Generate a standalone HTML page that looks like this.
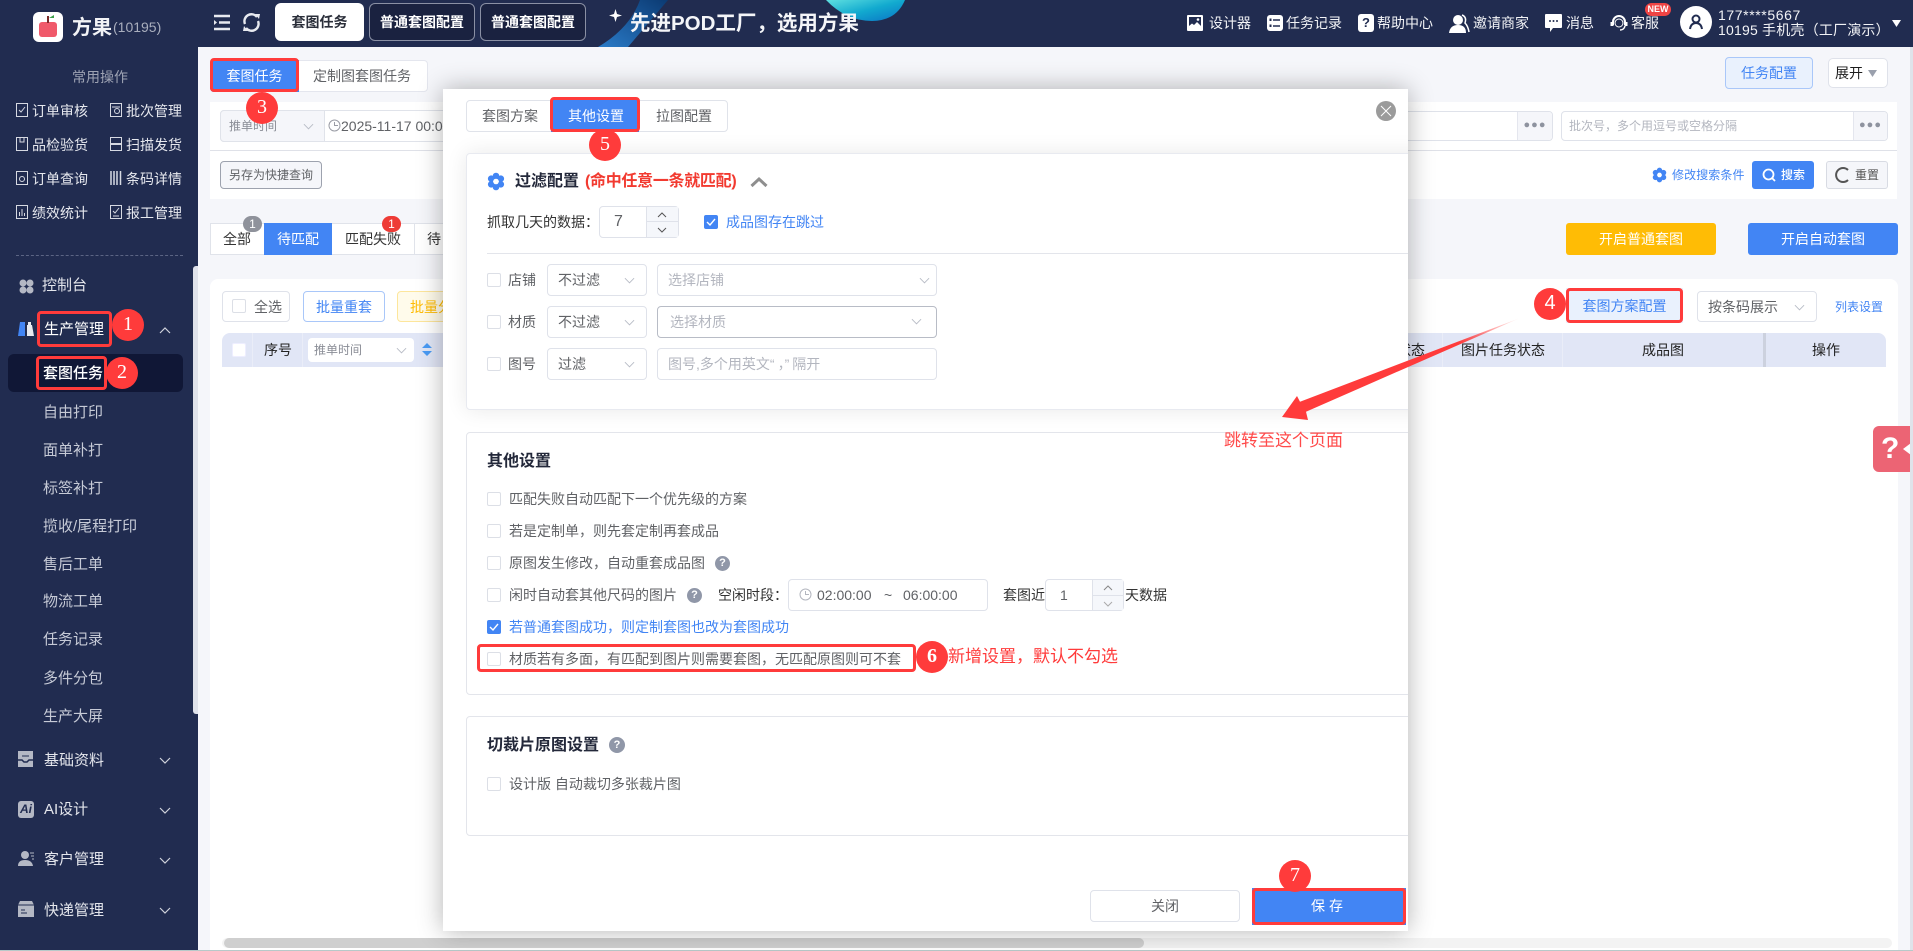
<!DOCTYPE html>
<html lang="zh"><head><meta charset="utf-8"><title>方果</title>
<style>
html,body{margin:0;padding:0;width:1913px;height:951px;overflow:hidden;background:#f5f6fa}
body{font-family:"Liberation Sans","Noto Sans CJK SC",sans-serif;font-size:14px;color:#333;position:relative}
.a{position:absolute;box-sizing:border-box}
.t{position:absolute;white-space:nowrap;line-height:20px}
.b{font-weight:700}
.nav{color:#c6cad6;font-size:15px}
.q{color:#e6e8ee;font-size:14px}
.m{color:#e4e6ec;font-size:15px}
.g{color:#606266}
.ph{color:#b3b6bf}
.bl{color:#4285f4}
.cb{position:absolute;box-sizing:border-box;width:14px;height:14px;border:1px solid #dcdfe6;border-radius:2px;background:#fff}
.ck{position:absolute;width:14px;height:14px;border-radius:2px;background:#4285f4}
.bx{position:absolute;box-sizing:border-box;background:#fff;border:1px solid #dfe2ea;border-radius:4px}
.rd{position:absolute;box-sizing:border-box;border:3px solid #ff3b3b;border-radius:4px}
.c{position:absolute;box-sizing:border-box;width:32px;height:32px;border-radius:50%;background:#ff3b3b;color:#fff;text-align:center;line-height:31px;font-size:20px;font-family:"Liberation Serif",serif}
.ce{text-align:center}
svg{position:absolute;overflow:visible}
.qi{position:absolute;width:15px;height:15px;border-radius:50%;background:#9097a8;color:#fff;font-size:11px;font-weight:700;line-height:15px;text-align:center}
</style></head><body>
<svg width="0" height="0" style="position:absolute"><defs>
<symbol id="d" viewBox="0 0 12 7"><polyline points="1,1 6,6 11,1" fill="none" stroke="#b8bcc6" stroke-width="1"/></symbol>
<symbol id="dw" viewBox="0 0 12 7"><polyline points="1,1 6,6 11,1" fill="none" stroke="#d0d3dc" stroke-width="1.2"/></symbol>
<symbol id="v" viewBox="0 0 14 14"><polyline points="3,7 6,10 11,4" fill="none" stroke="#fff" stroke-width="1.4"/></symbol>
<symbol id="gear" viewBox="0 0 18 18"><g fill="#4285f4"><circle cx="9" cy="3.500" r="3.300"/><circle cx="9" cy="14.500" r="3.300"/><circle cx="4.200" cy="6.200" r="3.300"/><circle cx="13.800" cy="6.200" r="3.300"/><circle cx="4.200" cy="11.800" r="3.300"/><circle cx="13.800" cy="11.800" r="3.300"/></g><circle cx="9" cy="9" r="2.800" fill="#fff"/></symbol>
<linearGradient id="g1" x1="0" y1="0" x2="1" y2="1"><stop offset="0" stop-color="#5fe0e0"/><stop offset=".5" stop-color="#12aacf"/><stop offset="1" stop-color="#0a72c4"/></linearGradient>
<linearGradient id="g2" x1="0" y1="1" x2="1" y2="0"><stop offset="0" stop-color="#2a7bc8"/><stop offset="1" stop-color="#0b3a72"/></linearGradient>
<linearGradient id="g3" x1="1" y1="0" x2="0" y2="1"><stop offset="0" stop-color="#ff3b3b" stop-opacity="0"/><stop offset=".25" stop-color="#ff3b3b"/><stop offset="1" stop-color="#ff3b3b"/></linearGradient>
</defs></svg>

<!-- header -->
<div class="a" style="left:0;top:0;width:1913px;height:47px;background:#212c50"></div>
<svg style="left:0;top:0" width="1913" height="47">
<path d="M598 47L628 47L668 0L640 0Q630 28 598 47Z" fill="url(#g2)"/>
<path d="M826 0Q846 21 872 21Q896 21 905 0Z" fill="url(#g1)"/>
<path d="M615.500 9L617 14L622 15.500L617 17L615.500 22L614 17L609 15.500L614 14Z" fill="#fff"/>
</svg>
<!-- logo -->
<div class="a" style="left:33px;top:12px;width:30px;height:30px;background:#fff;border-radius:6px"></div>
<div class="a" style="left:39px;top:22px;width:18px;height:15px;background:#f0596a;border-radius:3px"></div>
<svg style="left:39px;top:15px" width="18" height="9"><path d="M9 1V8" stroke="#7a2a2a" stroke-width="2"/><path d="M10 3L15 0V3Z" fill="#3ca04a"/></svg>
<div class="t b" style="left:72px;top:18px;font-size:20px;color:#f2f3f6">方果</div>
<div class="t" style="left:113px;top:17px;font-size:14px;color:#a9aebd">(10195)</div>
<svg style="left:213px;top:14px" width="18" height="17"><path d="M1 2H17M6 8.500H17M1 15H17" stroke="#e8eaf0" stroke-width="2.500" fill="none"/><path d="M1 6V11L4 8.500Z" fill="#e8eaf0"/></svg>
<svg style="left:242px;top:13px" width="19" height="19" viewBox="0 0 19 19"><path d="M3 11A7 7 0 0 1 15 4" fill="none" stroke="#e8eaf0" stroke-width="2.400"/><path d="M16 8A7 7 0 0 1 4 15" fill="none" stroke="#e8eaf0" stroke-width="2.400"/><path d="M13 1L18 1L17 6Z" fill="#e8eaf0"/><path d="M6 18L1 18L2 13Z" fill="#e8eaf0"/></svg>
<div class="a" style="left:275px;top:3px;width:89px;height:38px;background:#fff;border-radius:6px"></div>
<div class="t b ce" style="left:275px;top:12px;width:89px;color:#2b2f3a">套图任务</div>
<div class="a" style="left:369px;top:3px;width:106px;height:38px;border:1px solid #8a90a4;border-radius:6px;background:#1a2240"></div>
<div class="t b ce" style="left:369px;top:12px;width:106px;color:#fff">普通套图配置</div>
<div class="a" style="left:480px;top:3px;width:106px;height:38px;border:1px solid #8a90a4;border-radius:6px;background:#1a2240"></div>
<div class="t b ce" style="left:480px;top:12px;width:106px;color:#fff">普通套图配置</div>
<div class="t b" style="left:630px;top:13px;font-size:20.500px;color:#f4f5f8;line-height:22px">先进POD工厂，选用方果</div>

<svg style="left:1187px;top:15px" width="16" height="16"><rect width="16" height="16" rx="1" fill="#fff"/><path d="M2 2H14V11L10 7L7 10L5 8.500L2 11Z" fill="#212c50"/><circle cx="11" cy="4.500" r="1.300" fill="#fff"/></svg>
<div class="t" style="left:1209px;top:13px;color:#f2f3f6">设计器</div>
<svg style="left:1267px;top:15px" width="16" height="16"><rect width="16" height="16" rx="3" fill="#fff"/><path d="M6 5H13M6 11H13" stroke="#212c50" stroke-width="1.500"/><rect x="2.500" y="3.500" width="2" height="2.500" fill="#212c50"/><rect x="2.500" y="9.500" width="2" height="2.500" fill="#212c50"/></svg>
<div class="t" style="left:1286px;top:13px;color:#f2f3f6">任务记录</div>
<div class="a" style="left:1358px;top:14px;width:16px;height:18px;background:#fff;border-radius:3px;color:#212c50;font-size:13px;font-weight:700;text-align:center;line-height:18px">?</div>
<div class="t" style="left:1377px;top:13px;color:#f2f3f6">帮助中心</div>
<svg style="left:1449px;top:14px" width="20" height="19"><circle cx="9" cy="6" r="5" fill="#fff"/><path d="M0 19Q1 11 9 11Q17 11 17 19Z" fill="#fff"/><path d="M13 1Q18 3 16 9Q19 12 20 18" fill="none" stroke="#fff" stroke-width="1.500"/></svg>
<div class="t" style="left:1473px;top:13px;color:#f2f3f6">邀请商家</div>
<svg style="left:1545px;top:14px" width="17" height="19"><path d="M1 0H16Q17 0 17 1V13Q17 14 16 14H8L5 18V14H1Q0 14 0 13V1Q0 0 1 0Z" fill="#fff"/><circle cx="5" cy="7" r="1" fill="#212c50"/><circle cx="8.500" cy="7" r="1" fill="#212c50"/><circle cx="12" cy="7" r="1" fill="#212c50"/></svg>
<div class="t" style="left:1566px;top:13px;color:#f2f3f6">消息</div>
<svg style="left:1610px;top:14px" width="18" height="18"><path d="M3 11V8A6 6 0 0 1 15 8V11" fill="none" stroke="#fff" stroke-width="2"/><circle cx="9" cy="9" r="4" fill="none" stroke="#fff" stroke-width="1"/><path d="M0.500 8V12H3.500V8ZM14.500 8V12H17.500V8Z" fill="#fff"/><path d="M15 12Q14 16 10 16" fill="none" stroke="#fff" stroke-width="1.500"/></svg>
<div class="t" style="left:1631px;top:13px;color:#f2f3f6">客服</div>
<div class="a" style="left:1645px;top:3px;width:26px;height:13px;border-radius:7px;background:#ef4444;color:#fff;font-size:9px;font-weight:700;text-align:center;line-height:13px">NEW</div>
<div class="a" style="left:1680px;top:6px;width:32px;height:32px;border-radius:50%;background:#fff"></div>
<svg style="left:1689px;top:14px" width="14" height="16"><circle cx="7" cy="5" r="3.500" fill="none" stroke="#212c50" stroke-width="2"/><path d="M1 15Q2 9 7 9Q12 9 13 15" fill="none" stroke="#212c50" stroke-width="2"/></svg>
<div class="t" style="left:1718px;top:5px;color:#f2f3f6;letter-spacing:.6px">177****5667</div>
<div class="t" style="left:1718px;top:20px;color:#f2f3f6;letter-spacing:.2px">10195 手机壳（工厂演示）</div>
<svg style="left:1892px;top:20px" width="9" height="7"><path d="M0 0H9L4.500 7Z" fill="#fff"/></svg>

<!-- sidebar -->
<div class="a" style="left:0;top:47px;width:198px;height:904px;background:#212c50"></div>
<div class="a" style="left:193px;top:266px;width:5px;height:448px;background:#dfe2ea;border-radius:3px 0 0 3px"></div>
<div class="t" style="left:72px;top:67px;color:#9ea3b3">常用操作</div>

<svg style="left:16px;top:103px" width="12" height="14"><rect x=".5" y=".5" width="11" height="13" fill="none" stroke="#d6d9e2"/><path d="M3 7L5 9L9 4" fill="none" stroke="#d6d9e2"/></svg>
<div class="t q" style="left:32px;top:101px">订单审核</div>
<svg style="left:110px;top:103px" width="12" height="14"><rect x=".5" y=".5" width="11" height="13" fill="none" stroke="#d6d9e2"/><circle cx="7" cy="8" r="2.500" fill="none" stroke="#d6d9e2"/><path d="M2 4H10" stroke="#d6d9e2"/></svg>
<div class="t q" style="left:126px;top:101px">批次管理</div>
<svg style="left:16px;top:137px" width="12" height="14"><rect x=".5" y=".5" width="11" height="13" fill="none" stroke="#d6d9e2"/><path d="M4 1V5H8V1" fill="none" stroke="#d6d9e2"/></svg>
<div class="t q" style="left:32px;top:135px">品检验货</div>
<svg style="left:110px;top:137px" width="12" height="14"><rect x=".5" y=".5" width="11" height="13" fill="none" stroke="#d6d9e2"/><path d="M0 7H12" stroke="#d6d9e2" stroke-width="2"/></svg>
<div class="t q" style="left:126px;top:135px">扫描发货</div>
<svg style="left:16px;top:171px" width="12" height="14"><rect x=".5" y=".5" width="11" height="13" fill="none" stroke="#d6d9e2"/><circle cx="6" cy="8" r="2.500" fill="none" stroke="#d6d9e2"/></svg>
<div class="t q" style="left:32px;top:169px">订单查询</div>
<svg style="left:110px;top:171px" width="12" height="14"><path d="M1 0V14M4 0V14M7 0V14M10.500 0V14" stroke="#d6d9e2" stroke-width="1.500"/></svg>
<div class="t q" style="left:126px;top:169px">条码详情</div>
<svg style="left:16px;top:205px" width="12" height="14"><rect x=".5" y=".5" width="11" height="13" fill="none" stroke="#d6d9e2"/><path d="M3.500 11V7M6 11V4M8.500 11V8" stroke="#d6d9e2"/></svg>
<div class="t q" style="left:32px;top:203px">绩效统计</div>
<svg style="left:110px;top:205px" width="12" height="14"><rect x=".5" y=".5" width="11" height="13" fill="none" stroke="#d6d9e2"/><path d="M3 6L5 8L9 3M3 11H9" fill="none" stroke="#d6d9e2"/></svg>
<div class="t q" style="left:126px;top:203px">报工管理</div>
<div class="a" style="left:16px;top:255px;width:167px;border-top:1px dashed #5c6584"></div>

<svg style="left:19px;top:279px" width="15" height="15"><circle cx="4" cy="4" r="3.500" fill="#b4b8c4"/><circle cx="11" cy="4" r="3.500" fill="#b4b8c4"/><circle cx="4" cy="11" r="3.500" fill="#b4b8c4"/><circle cx="11" cy="11" r="3.500" fill="#b4b8c4"/></svg>
<div class="t m" style="left:42px;top:276px">控制台</div>
<svg style="left:18px;top:322px" width="16" height="14"><path d="M0 14L2 0H7V14Z" fill="#4285f4"/><path d="M9 14V3H14L16 14Z" fill="#e8eaf0"/><path d="M10 0H13V3H10Z" fill="#e8eaf0"/></svg>
<div class="t m" style="left:44px;top:320px;color:#fff">生产管理</div>
<svg style="left:159px;top:327px" width="12" height="7"><polyline points="1,6 6,1 11,6" fill="none" stroke="#d0d3dc" stroke-width="1.200"/></svg>
<div class="a" style="left:8px;top:354px;width:175px;height:38px;background:#101736;border-radius:6px"></div>
<div class="t nav" style="left:43px;top:364px;color:#fff;font-weight:500">套图任务</div>
<div class="t nav" style="left:43px;top:403px">自由打印</div>
<div class="t nav" style="left:43px;top:441px">面单补打</div>
<div class="t nav" style="left:43px;top:479px">标签补打</div>
<div class="t nav" style="left:43px;top:517px">揽收/尾程打印</div>
<div class="t nav" style="left:43px;top:555px">售后工单</div>
<div class="t nav" style="left:43px;top:592px">物流工单</div>
<div class="t nav" style="left:43px;top:630px">任务记录</div>
<div class="t nav" style="left:43px;top:669px">多件分包</div>
<div class="t nav" style="left:43px;top:707px">生产大屏</div>

<svg style="left:18px;top:751px" width="15" height="16"><path d="M0 0H15V16H0Z" fill="#b4b8c4"/><path d="M0 9H4L6 11H9L11 9H15" fill="none" stroke="#212c50" stroke-width="1.500"/><path d="M4 5H11" stroke="#212c50"/></svg>
<div class="t m" style="left:44px;top:751px">基础资料</div>
<svg style="left:159px;top:757px" width="12" height="7"><use href="#dw"/></svg>
<div class="a" style="left:18px;top:801px;width:16px;height:17px;background:#b4b8c4;border-radius:3px;color:#212c50;font-size:12px;font-weight:700;font-style:italic;line-height:17px;text-align:center">Ai</div>
<div class="t m" style="left:44px;top:800px">AI设计</div>
<svg style="left:159px;top:807px" width="12" height="7"><use href="#dw"/></svg>
<svg style="left:18px;top:851px" width="16" height="15"><circle cx="7" cy="4" r="4" fill="#b4b8c4"/><path d="M0 15Q0 9 7 9Q14 9 15 15Z" fill="#b4b8c4"/><path d="M12 2H16M13 5H16M14 8H16" stroke="#b4b8c4"/></svg>
<div class="t m" style="left:44px;top:850px">客户管理</div>
<svg style="left:159px;top:857px" width="12" height="7"><use href="#dw"/></svg>
<svg style="left:18px;top:901px" width="16" height="16"><path d="M2 0H14L16 4V16H0V4Z" fill="#b4b8c4"/><path d="M0 4H16" stroke="#212c50"/><path d="M3 9H7M3 12H9" stroke="#212c50"/></svg>
<div class="t m" style="left:44px;top:901px">快递管理</div>
<svg style="left:159px;top:907px" width="12" height="7"><use href="#dw"/></svg>

<!-- main -->
<div class="a" style="left:210px;top:60px;width:218px;height:32px;background:#fff;border:1px solid #e4e6ee;border-radius:4px"></div>
<div class="a" style="left:210px;top:60px;width:89px;height:32px;background:#4285f4;border-radius:4px 0 0 4px"></div>
<div class="t ce" style="left:210px;top:66px;width:89px;color:#fff">套图任务</div>
<div class="t g" style="left:313px;top:66px">定制图套图任务</div>
<div class="a" style="left:1725px;top:57px;width:88px;height:32px;background:#e9f1fd;border:1px solid #a9c7f9;border-radius:4px"></div>
<div class="t ce bl" style="left:1725px;top:63px;width:88px">任务配置</div>
<div class="bx" style="left:1828px;top:58px;width:60px;height:30px;border-radius:5px"></div>
<div class="t" style="left:1835px;top:63px;color:#1c1c1c">展开</div>
<svg style="left:1868px;top:70px" width="9" height="7"><path d="M0 0H9L4.500 7Z" fill="#9aa0ad"/></svg>

<div class="a" style="left:210px;top:102px;width:1687px;height:97px;background:#fff"></div>
<div class="a" style="left:210px;top:150px;width:1687px;height:1px;background:#dfe1e8"></div>
<div class="a" style="left:220px;top:110px;width:300px;height:32px;background:#fff;border:1px solid #e0e3ea;border-radius:4px"></div>
<div class="a" style="left:220px;top:110px;width:105px;height:32px;background:#f5f6fa;border:1px solid #e0e3ea;border-radius:4px 0 0 4px"></div>
<div class="t g" style="left:229px;top:116px;font-size:12px;color:#8a8d96">推单时间</div>
<svg style="left:303px;top:123px" width="11" height="7"><use href="#d"/></svg>
<svg style="left:328px;top:119px" width="13" height="13"><circle cx="6.500" cy="6.500" r="5.500" fill="none" stroke="#9a9ca5"/><path d="M6.500 3V6.500H10" fill="none" stroke="#9a9ca5"/></svg>
<div class="t g" style="left:341px;top:116px">2025-11-17 00:00-</div>

<div class="bx" style="left:1300px;top:111px;width:253px;height:30px"></div>
<div class="a" style="left:1517px;top:112px;width:35px;height:28px;background:#f5f6fa;border-left:1px solid #e4e6ee;border-radius:0 4px 4px 0;text-align:center;color:#8e939f;font-size:11px;letter-spacing:1px;line-height:26px;font-weight:700">●●●</div>
<div class="bx" style="left:1561px;top:111px;width:327px;height:30px"></div>
<div class="t ph" style="left:1569px;top:116px;font-size:12px">批次号，多个用逗号或空格分隔</div>
<div class="a" style="left:1853px;top:112px;width:34px;height:28px;background:#f5f6fa;border-left:1px solid #e4e6ee;border-radius:0 4px 4px 0;text-align:center;color:#8e939f;font-size:11px;letter-spacing:1px;line-height:26px;font-weight:700">●●●</div>

<div class="a" style="left:220px;top:161px;width:102px;height:28px;background:#f5f6fa;border:1px solid #9da2ae;border-radius:4px"></div>
<div class="t g" style="left:229px;top:165px;font-size:12px">另存为快捷查询</div>
<svg style="left:1652px;top:167px" width="15" height="16"><use href="#gear" width="15" height="16"/></svg>
<div class="t bl" style="left:1672px;top:165px;font-size:12px;letter-spacing:.1px">修改搜索条件</div>
<div class="a" style="left:1752px;top:161px;width:62px;height:28px;background:#4285f4;border-radius:3px"></div>
<svg style="left:1762px;top:168px" width="15" height="15"><circle cx="6.500" cy="6.500" r="5" fill="none" stroke="#fff" stroke-width="1.800"/><path d="M10 10L13 13" stroke="#fff" stroke-width="1.800"/></svg>
<div class="t" style="left:1781px;top:165px;font-size:12px;color:#fff;font-weight:500">搜索</div>
<div class="a" style="left:1826px;top:161px;width:62px;height:28px;background:#f5f6fa;border:1px solid #d8dbe3;border-radius:3px"></div>
<svg style="left:1835px;top:167px" width="15" height="16"><path d="M13 3A7 7 0 1 0 13 13" fill="none" stroke="#555" stroke-width="2"/></svg>
<div class="t" style="left:1855px;top:165px;font-size:12px;color:#555">重置</div>

<div class="a" style="left:210px;top:223px;width:240px;height:32px;background:#fff;border:1px solid #e0e3ea"></div>
<div class="t ce" style="left:210px;top:229px;width:54px;color:#333">全部</div>
<div class="a" style="left:264px;top:223px;width:68px;height:32px;background:#4285f4"></div>
<div class="t ce" style="left:264px;top:229px;width:68px;color:#fff">待匹配</div>
<div class="t ce" style="left:332px;top:229px;width:82px;color:#333">匹配失败</div>
<div class="a" style="left:414px;top:223px;width:1px;height:32px;background:#e0e3ea"></div>
<div class="t" style="left:427px;top:229px;color:#333">待</div>
<div class="a" style="left:243px;top:216px;width:19px;height:16px;border-radius:8px;background:#8f929b;color:#fff;font-size:12px;line-height:16px;text-align:center">1</div>
<div class="a" style="left:382px;top:216px;width:19px;height:16px;border-radius:8px;background:#ee3b36;color:#fff;font-size:12px;line-height:16px;text-align:center">1</div>
<div class="a" style="left:1566px;top:223px;width:150px;height:32px;background:#ffbc05;border-radius:3px"></div>
<div class="t ce" style="left:1566px;top:229px;width:150px;color:#fff">开启普通套图</div>
<div class="a" style="left:1748px;top:223px;width:150px;height:32px;background:#4285f4;border-radius:3px"></div>
<div class="t ce" style="left:1748px;top:229px;width:150px;color:#fff">开启自动套图</div>

<div class="a" style="left:210px;top:279px;width:1688px;height:672px;background:#fff;border-radius:8px 8px 0 0"></div>
<div class="bx" style="left:222px;top:291px;width:68px;height:31px"></div>
<div class="cb" style="left:232px;top:299px"></div>
<div class="t g" style="left:254px;top:297px">全选</div>
<div class="a" style="left:303px;top:291px;width:82px;height:31px;background:#fff;border:1px solid #a9c7f9;border-radius:4px"></div>
<div class="t ce bl" style="left:303px;top:297px;width:82px">批量重套</div>
<div class="a" style="left:397px;top:291px;width:60px;height:31px;background:#fffbeb;border:1px solid #fde69c;border-radius:4px"></div>
<div class="t" style="left:410px;top:297px;color:#ffbc05">批量分</div>
<div class="a" style="left:1566px;top:288px;width:117px;height:35px;background:#e9f1fd"></div>
<div class="t ce bl" style="left:1566px;top:296px;width:117px">套图方案配置</div>
<div class="bx" style="left:1697px;top:291px;width:120px;height:31px"></div>
<div class="t g" style="left:1708px;top:297px">按条码展示</div>
<svg style="left:1794px;top:304px" width="11" height="7"><use href="#d"/></svg>
<div class="t bl" style="left:1835px;top:297px;font-size:12px">列表设置</div>
<div class="a" style="left:222px;top:333px;width:1664px;height:34px;background:#e1e6f6;border-radius:8px 8px 0 0"></div>
<div class="a" style="left:252px;top:333px;width:1px;height:34px;background:#eaedf8"></div>
<div class="a" style="left:302px;top:333px;width:1px;height:34px;background:#eaedf8"></div>
<div class="cb" style="left:232px;top:343px;border-color:#eef"></div>
<div class="t ce" style="left:253px;top:340px;width:50px;color:#222">序号</div>
<div class="a" style="left:308px;top:338px;width:106px;height:24px;background:#fff;border-radius:4px"></div>
<div class="t" style="left:314px;top:340px;font-size:12px;color:#8a8d96">推单时间</div>
<svg style="left:396px;top:347px" width="11" height="7"><use href="#d"/></svg>
<svg style="left:422px;top:343px" width="10" height="14"><path d="M0 5L5 0L10 5ZM0 8H10L5 13Z" fill="#4a9bf5"/></svg>
<div class="t" style="left:1397px;top:340px;color:#222">状态</div>
<div class="a" style="left:1442px;top:333px;width:1px;height:34px;background:#eaedf8"></div>
<div class="t ce" style="left:1443px;top:340px;width:120px;color:#222">图片任务状态</div>
<div class="a" style="left:1562px;top:333px;width:1px;height:34px;background:#eaedf8"></div>
<div class="t ce" style="left:1563px;top:340px;width:200px;color:#222">成品图</div>
<div class="a" style="left:1763px;top:333px;width:3px;height:34px;background:#ccd1de"></div>
<div class="t ce" style="left:1766px;top:340px;width:120px;color:#222">操作</div>

<div class="a" style="left:1873px;top:426px;width:40px;height:46px;background:#ec6474;border-radius:6px 0 0 6px"></div>
<div class="t b" style="left:1881px;top:433px;color:#fff;font-size:30px;line-height:32px">?</div>
<svg style="left:1903px;top:443px" width="8" height="12"><path d="M8 0V12L0 6Z" fill="#fff"/></svg>
<div class="a" style="left:1910px;top:47px;width:3px;height:904px;background:#dfe3ea"></div>

<div class="a" style="left:222px;top:938px;width:1670px;height:10px;background:#f3f3f3;border-radius:5px"></div>
<div class="a" style="left:224px;top:938px;width:920px;height:10px;background:#cfcfcf;border-radius:5px"></div>
<div class="a" style="left:0;top:950px;width:1913px;height:1px;background:#b7c9c9"></div>

<!-- modal -->
<div class="a" style="left:443px;top:89px;width:965px;height:842px;background:#fff;box-shadow:0 0 24px rgba(0,0,0,.3);overflow:hidden">
<div class="a" style="left:-443px;top:-89px;width:1913px;height:951px">
<div class="a" style="left:466px;top:100px;width:262px;height:32px;background:#fff;border:1px solid #e0e3ea;border-radius:4px"></div>
<div class="t g ce" style="left:468px;top:106px;width:84px">套图方案</div>
<div class="a" style="left:551px;top:100px;width:88px;height:32px;background:#4285f4"></div>
<div class="t ce" style="left:552px;top:106px;width:88px;color:#fff">其他设置</div>
<div class="t g ce" style="left:640px;top:106px;width:88px">拉图配置</div>
<div class="a" style="left:1376px;top:101px;width:20px;height:20px;border-radius:50%;background:#9b9b9b"></div>
<svg style="left:1380px;top:105px" width="12" height="12"><path d="M1 1L11 11M11 1L1 11" stroke="#fff" stroke-width="1"/></svg>

<!-- filter card -->
<div class="a" style="left:466px;top:153px;width:1000px;height:257px;background:#fff;border:1px solid #e8eaf0;border-radius:4px;box-shadow:0 0 22px rgba(0,0,0,.09)"></div>
<svg style="left:487px;top:172px" width="18" height="19"><use href="#gear" width="18" height="19"/></svg>
<div class="t b" style="left:515px;top:172px;font-size:16px;color:#23283a">过滤配置</div>
<div class="t b" style="left:585px;top:172px;font-size:16px;color:#f23a30;letter-spacing:-.3px">(命中任意一条就匹配)</div>
<svg style="left:750px;top:177px" width="18" height="10"><polyline points="1.500,9 9,2 16.500,9" fill="none" stroke="#8e8e8e" stroke-width="3"/></svg>
<div class="t" style="left:487px;top:212px;color:#333">抓取几天的数据：</div>
<div class="bx" style="left:599px;top:206px;width:80px;height:32px"></div>
<div class="a" style="left:646px;top:207px;width:32px;height:30px;background:#f5f7fb;border-left:1px solid #dfe2ea"></div>
<div class="a" style="left:646px;top:221px;width:32px;height:1px;background:#dfe2ea"></div>
<svg style="left:657px;top:212px" width="10" height="6"><polyline points="1,5 5,1 9,5" fill="none" stroke="#555"/></svg>
<svg style="left:657px;top:227px" width="10" height="6"><polyline points="1,1 5,5 9,1" fill="none" stroke="#555"/></svg>
<div class="t g" style="left:614px;top:212px;font-size:16px">7</div>
<div class="ck" style="left:704px;top:215px"></div><svg style="left:704px;top:215px" width="14" height="14"><use href="#v"/></svg>
<div class="t bl" style="left:726px;top:212px">成品图存在跳过</div>
<div class="a" style="left:487px;top:253px;width:1000px;height:1px;background:#e3e5eb"></div>

<div class="cb" style="left:487px;top:273px"></div>
<div class="t g" style="left:508px;top:270px">店铺</div>
<div class="bx" style="left:547px;top:264px;width:100px;height:32px"></div>
<div class="t g" style="left:558px;top:270px">不过滤</div>
<svg style="left:624px;top:277px" width="11" height="7"><use href="#d"/></svg>
<div class="bx" style="left:657px;top:264px;width:280px;height:32px"></div>
<div class="t ph" style="left:668px;top:270px">选择店铺</div>
<svg style="left:919px;top:277px" width="11" height="7"><use href="#d"/></svg>

<div class="cb" style="left:487px;top:315px"></div>
<div class="t g" style="left:508px;top:312px">材质</div>
<div class="bx" style="left:547px;top:306px;width:100px;height:32px"></div>
<div class="t g" style="left:558px;top:312px">不过滤</div>
<svg style="left:624px;top:319px" width="11" height="7"><use href="#d"/></svg>
<div class="bx" style="left:657px;top:306px;width:280px;height:32px;border-color:#b8bcc6"></div>
<div class="t ph" style="left:670px;top:312px">选择材质</div>
<svg style="left:911px;top:318px" width="11" height="7"><use href="#d"/></svg>

<div class="cb" style="left:487px;top:357px"></div>
<div class="t g" style="left:508px;top:354px">图号</div>
<div class="bx" style="left:547px;top:348px;width:100px;height:32px"></div>
<div class="t g" style="left:558px;top:354px">过滤</div>
<svg style="left:624px;top:361px" width="11" height="7"><use href="#d"/></svg>
<div class="bx" style="left:657px;top:348px;width:280px;height:32px"></div>
<div class="t ph" style="left:668px;top:354px">图号,多个用英文<span style="letter-spacing:3px">“</span>，<span style="letter-spacing:3px">”</span>隔开</div>

<!-- other settings -->
<div class="a" style="left:466px;top:432px;width:1000px;height:263px;background:#fff;border:1px solid #e3e5eb;border-radius:4px"></div>
<div class="t b" style="left:487px;top:452px;font-size:16px;color:#23283a">其他设置</div>
<div class="cb" style="left:487px;top:492px"></div>
<div class="t g" style="left:509px;top:489px">匹配失败自动匹配下一个优先级的方案</div>
<div class="cb" style="left:487px;top:524px"></div>
<div class="t g" style="left:509px;top:521px">若是定制单，则先套定制再套成品</div>
<div class="cb" style="left:487px;top:556px"></div>
<div class="t g" style="left:509px;top:553px">原图发生修改，自动重套成品图</div>
<div class="qi" style="left:715px;top:556px">?</div>
<div class="cb" style="left:487px;top:588px"></div>
<div class="t g" style="left:509px;top:585px">闲时自动套其他尺码的图片</div>
<div class="qi" style="left:687px;top:588px">?</div>
<div class="t" style="left:718px;top:585px;color:#333">空闲时段：</div>
<div class="bx" style="left:788px;top:579px;width:200px;height:32px"></div>
<svg style="left:799px;top:588px" width="13" height="13"><circle cx="6.500" cy="6.500" r="5.500" fill="none" stroke="#b3b6bf"/><path d="M6.500 3V6.500H10" fill="none" stroke="#b3b6bf"/></svg>
<div class="t g" style="left:817px;top:585px">02:00:00</div>
<div class="t g" style="left:884px;top:585px">~</div>
<div class="t g" style="left:903px;top:585px">06:00:00</div>
<div class="t" style="left:1003px;top:585px;color:#333">套图近</div>
<div class="bx" style="left:1045px;top:579px;width:79px;height:32px"></div>
<div class="a" style="left:1092px;top:580px;width:31px;height:30px;background:#f5f7fb;border-left:1px solid #dfe2ea"></div>
<div class="a" style="left:1092px;top:595px;width:31px;height:1px;background:#dfe2ea"></div>
<svg style="left:1103px;top:585px" width="10" height="6"><polyline points="1,5 5,1 9,5" fill="none" stroke="#888"/></svg>
<svg style="left:1103px;top:601px" width="10" height="6"><polyline points="1,1 5,5 9,1" fill="none" stroke="#aaa"/></svg>
<div class="t g" style="left:1060px;top:585px;font-size:14px">1</div>
<div class="t" style="left:1125px;top:585px;color:#333">天数据</div>
<div class="ck" style="left:487px;top:620px"></div><svg style="left:487px;top:620px" width="14" height="14"><use href="#v"/></svg>
<div class="t bl" style="left:509px;top:617px">若普通套图成功，则定制套图也改为套图成功</div>
<div class="cb" style="left:487px;top:652px"></div>
<div class="t g" style="left:509px;top:649px">材质若有多面，有匹配到图片则需要套图，无匹配原图则可不套</div>

<!-- cut -->
<div class="a" style="left:466px;top:716px;width:1000px;height:120px;background:#fff;border:1px solid #e3e5eb;border-radius:4px"></div>
<div class="t b" style="left:487px;top:736px;font-size:16px;color:#23283a">切裁片原图设置</div>
<div class="qi" style="left:609px;top:737px;width:16px;height:16px;line-height:16px">?</div>
<div class="cb" style="left:487px;top:777px"></div>
<div class="t g" style="left:509px;top:774px">设计版 自动裁切多张裁片图</div>

<div class="bx" style="left:1090px;top:890px;width:150px;height:32px"></div>
<div class="t g ce" style="left:1090px;top:896px;width:150px">关闭</div>
<div class="a" style="left:1252px;top:888px;width:154px;height:37px;background:#4285f4"></div>
<div class="t ce" style="left:1252px;top:896px;width:154px;color:#fff;letter-spacing:4px">保存</div>
</div></div>

<!-- annotations -->
<div class="rd" style="left:210px;top:58px;width:89px;height:34px"></div>
<div class="c" style="left:246px;top:92px">3</div>
<div class="rd" style="left:37px;top:311px;width:75px;height:36px"></div>
<div class="c" style="left:112px;top:309px">1</div>
<div class="rd" style="left:36px;top:356px;width:71px;height:34px"></div>
<div class="c" style="left:106px;top:357px">2</div>
<div class="rd" style="left:550px;top:97px;width:90px;height:35px"></div>
<div class="c" style="left:589px;top:129px">5</div>
<div class="rd" style="left:1566px;top:288px;width:117px;height:35px"></div>
<div class="c" style="left:1534px;top:288px;font-family:'Liberation Sans',sans-serif">4</div>
<div class="rd" style="left:477px;top:644px;width:439px;height:28px"></div>
<div class="c" style="left:916px;top:641px;font-weight:700">6</div>
<div class="t" style="left:948px;top:647px;color:#ff3b3b;font-size:17px">新增设置，默认不勾选</div>
<div class="rd" style="left:1252px;top:888px;width:154px;height:37px"></div>
<div class="c" style="left:1279px;top:860px">7</div>
<svg style="left:0;top:0" width="1913" height="951"><path d="M1520 318L1306 411.700L1308 420L1282 417L1297 396L1300 401.700Z" fill="url(#g3)"/></svg>
<div class="t" style="left:1224px;top:431px;color:#ff4a4a;font-size:17px">跳转至这个页面</div>
</body></html>
